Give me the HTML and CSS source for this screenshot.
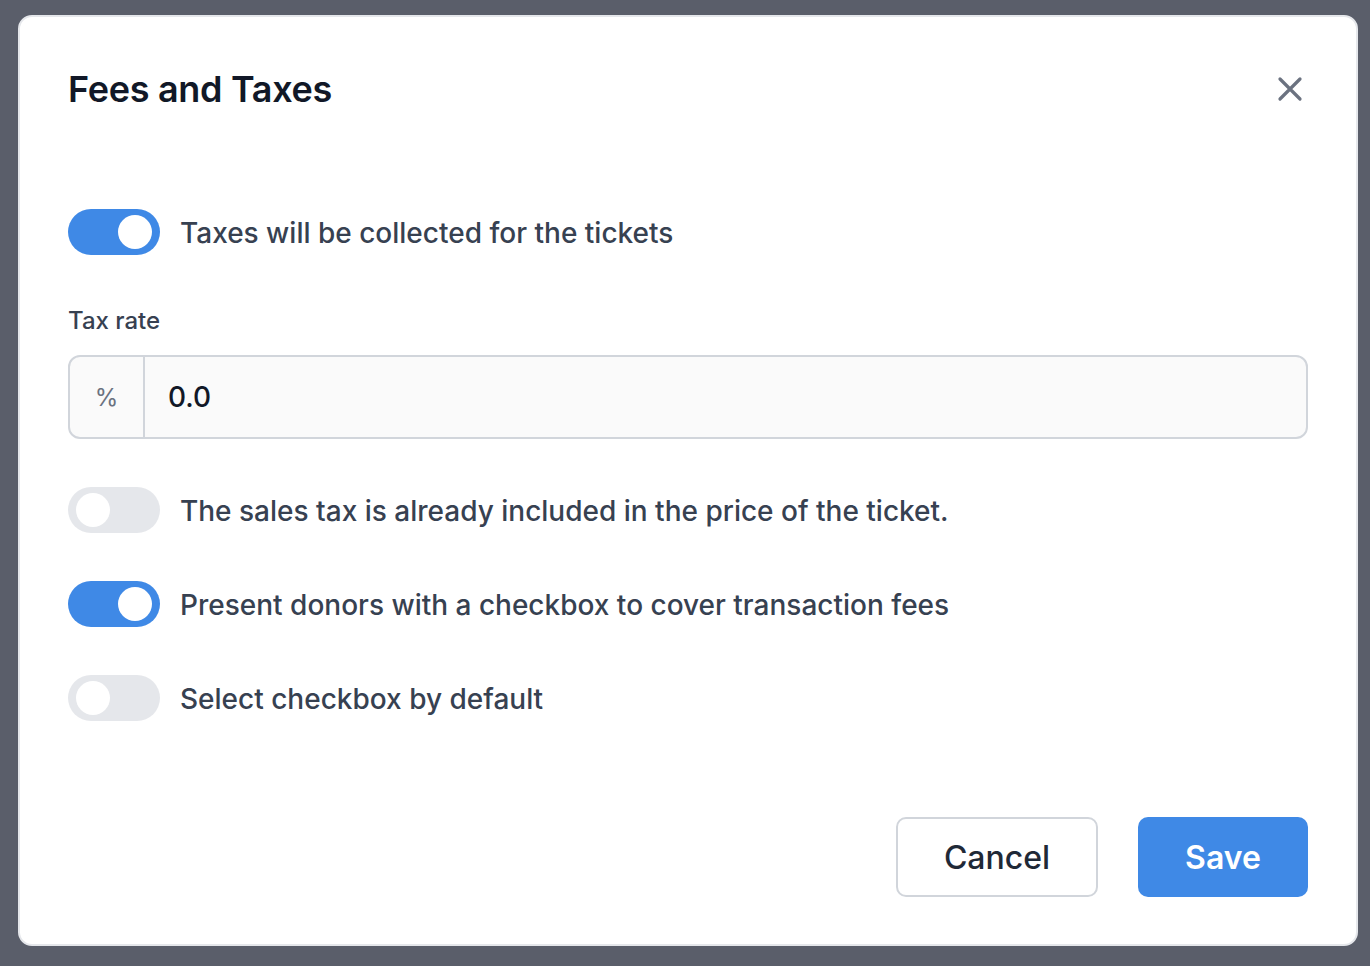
FILE: index.html
```html
<!DOCTYPE html>
<html lang="en">
<head>
  <meta charset="UTF-8">
  <title>Fees and Taxes</title>
  <link rel="stylesheet" href="styles.css">
</head>
<body>
  <div class="modal">
    <div class="modal-header">
      <h1>Fees and Taxes</h1>
      <button class="close" aria-label="Close">
        <svg width="30" height="30" viewBox="0 0 24 24" fill="none" stroke="#6b7280" stroke-width="2.6" stroke-linecap="round">
          <path d="M4 4L20 20M20 4L4 20"/>
        </svg>
      </button>
    </div>

    <div class="modal-body">
      <div class="toggle-row first">
        <span class="toggle on"><span class="knob"></span></span>
        <span class="toggle-label">Taxes will be collected for the tickets</span>
      </div>

      <label class="field-label" for="taxRate">Tax rate</label>
      <div class="input-group">
        <span class="addon">%</span>
        <input id="taxRate" type="text" value="0.0">
      </div>

      <div class="toggle-row">
        <span class="toggle"><span class="knob"></span></span>
        <span class="toggle-label">The sales tax is already included in the price of the ticket.</span>
      </div>

      <div class="toggle-row">
        <span class="toggle on"><span class="knob"></span></span>
        <span class="toggle-label">Present donors with a checkbox to cover transaction fees</span>
      </div>

      <div class="toggle-row">
        <span class="toggle"><span class="knob"></span></span>
        <span class="toggle-label">Select checkbox by default</span>
      </div>
    </div>

    <div class="modal-footer">
      <button class="btn btn-cancel">Cancel</button>
      <button class="btn btn-save">Save</button>
    </div>
  </div>
</body>
</html>
```

FILE: styles.css
```css
body {
  margin: 0;
  padding: 15px 12px 20px 18px;
  height: 966px;
  box-sizing: border-box;
  background: #5a5e6a;
  font-family: Inter, 'Noto Sans', sans-serif;
}

.modal {
  height: 931px;
  box-sizing: border-box;
  background: #fff;
  border: 2px solid #e5e7eb;
  border-radius: 14px;
  padding: 48px 48px 47px 48px;
  display: flex;
  flex-direction: column;
}

.modal-header {
  display: flex;
  align-items: center;
  justify-content: space-between;
  height: 48px;
}

h1 {
  margin: 0;
  font-size: 36px;
  font-weight: 600;
  color: #111827;
  letter-spacing: -0.3px;
}

.close {
  background: none;
  border: none;
  padding: 0;
  margin-right: 3px;
  margin-top: 0;
  cursor: pointer;
  display: flex;
}

.modal-body {
  padding-top: 96px;
  flex: 1;
}

.toggle-row {
  display: flex;
  align-items: center;
  gap: 20px;
  height: 46px;
  margin-top: 48px;
}

.toggle-row.first {
  margin-top: 0;
}

.toggle {
  width: 92px;
  height: 46px;
  border-radius: 23px;
  background: #e5e7eb;
  position: relative;
  flex-shrink: 0;
}

.toggle.on {
  background: #3f89e6;
}

.knob {
  position: absolute;
  top: 6px;
  left: 8px;
  width: 34px;
  height: 34px;
  border-radius: 50%;
  background: #fff;
}

.toggle.on .knob {
  left: 50px;
}

.toggle-label {
  font-size: 28px;
  font-weight: 500;
  color: #374151;
  padding-top: 2px;
}

.field-label {
  display: block;
  margin-top: 49px;
  font-size: 24px;
  font-weight: 500;
  color: #374151;
  line-height: 32px;
  padding-top: 1px;
}

.input-group {
  display: flex;
  margin-top: 18px;
  height: 84px;
  box-sizing: border-box;
  border: 2px solid #d1d5db;
  border-radius: 12px;
  background: #fafafa;
  overflow: hidden;
  margin-bottom: 1px;
}

.addon {
  width: 73px;
  display: flex;
  align-items: center;
  justify-content: center;
  border-right: 2px solid #d1d5db;
  font-size: 24px;
  color: #6b7280;
}

.input-group input {
  flex: 1;
  border: none;
  background: transparent;
  padding: 0 23px;
  font-family: inherit;
  font-size: 28px;
  font-weight: 500;
  color: #111827;
  outline: none;
}

.modal-footer {
  display: flex;
  justify-content: flex-end;
  gap: 40px;
}

.btn {
  height: 80px;
  font-family: inherit;
  font-size: 32px;
  border-radius: 10px;
  cursor: pointer;
}

.btn-cancel {
  width: 202px;
  background: #fff;
  border: 2px solid #d1d5db;
  color: #1f2937;
  font-weight: 500;
}

.btn-save {
  width: 170px;
  background: #3f89e6;
  border: none;
  color: #fff;
  font-weight: 600;
}
```
